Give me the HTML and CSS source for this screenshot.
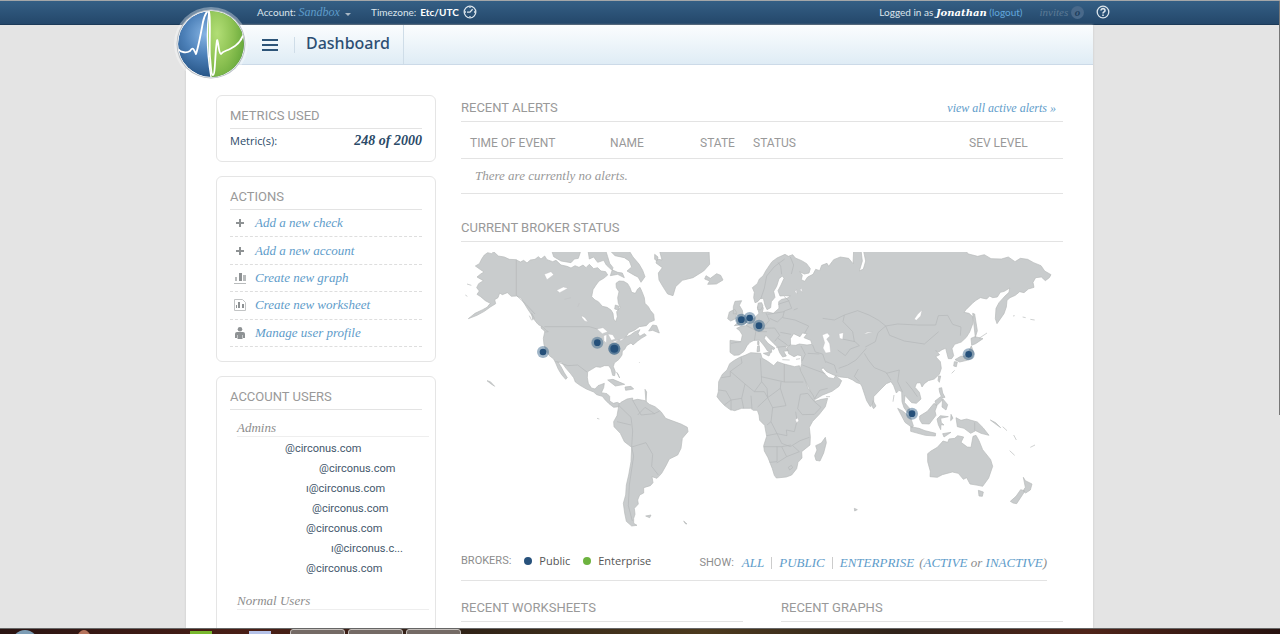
FILE: index.html
```html
<!DOCTYPE html>
<html lang="en">
<head>
<meta charset="utf-8">
<title>Dashboard</title>
<link rel="stylesheet" href="styles.css">
</head>
<body>
<div class="viewport">
  <header class="topbar">
    <div class="topbar-inner">
      <span class="account">Account: <a href="#account" class="account-name">Sandbox</a><span class="caret"></span></span>
      <span class="timezone">Timezone: <strong>Etc/UTC</strong>
        <svg class="round-icon" viewBox="0 0 14 14" aria-hidden="true"><circle cx="7" cy="7" r="5.8"/><path d="M4 7.2h3l2.6-3M7 2v1M12 7h-1M7 12v-1M2 7h1"/></svg>
      </span>
      <div class="session">
        <span>Logged in as <strong class="user">Jonathan</strong> <a href="#logout" class="logout">(logout)</a></span>
        <span class="invites">invites <span class="count">o</span></span>
        <a href="#help" class="help" aria-label="Help"><svg class="round-icon" viewBox="0 0 14 14" aria-hidden="true"><circle cx="7" cy="7" r="5.8"/><path class="thick" d="M5 5.6c0-2.7 4.2-2.5 4 0-.1 1.3-2 1.3-2 2.8M7 9.6v1.3"/></svg></a>
      </div>
    </div>
  </header>

  <div class="page">
    <div class="titlebar">
      <a href="#home" class="logo" aria-label="Circonus">
        <svg viewBox="0 0 80 80" aria-hidden="true">
          <defs>
            <radialGradient id="blue" cx=".42" cy=".35" r=".65"><stop offset="0" stop-color="#86b4e4"/><stop offset=".5" stop-color="#4c80b8"/><stop offset="1" stop-color="#275587"/></radialGradient>
            <radialGradient id="green" cx=".25" cy=".35" r=".8"><stop offset="0" stop-color="#b2de76"/><stop offset=".55" stop-color="#8cc152"/><stop offset="1" stop-color="#62a537"/></radialGradient>
            <clipPath id="disc"><circle cx="40" cy="40" r="33"/></clipPath>
          </defs>
          <circle cx="40" cy="40" r="37" fill="#fff" opacity=".35"/>
          <circle cx="40" cy="40" r="34.500" fill="#b9bfc5"/>
          <circle cx="40" cy="40" r="33.500" fill="#fff"/>
          <g clip-path="url(#disc)">
            <circle cx="40" cy="40" r="33" fill="url(#blue)"/>
            <path d="M38 5h36v70H40Q35 40 38 5Z" fill="url(#green)"/>
            <path d="M7 45c3 4 9 4 12 2 3-5 4-1 6 3 2-6 5-21 7-32 2-9 5-12 6-10 2 4 0 35 1 45s1 18 3 18 2-16 3-26 1-11 2-6 1 10 3 11c2-3 5-3 9-5 8-4 13-10 14-18" fill="none" stroke="#fff" stroke-width="1.8" stroke-linejoin="round"/>
            <path d="M38 7q-4 31 2 66" fill="none" stroke="#fff" stroke-width="1.4"/>
          </g>
        </svg>
      </a>
      <button class="menu" aria-label="Menu"><span></span><span></span><span></span></button>
      <h1>Dashboard</h1>
    </div>

    <div class="content">
      <aside class="sidebar">
        <section class="card metrics">
          <h2>METRICS USED</h2>
          <div class="metric"><span>Metric(s):</span><strong>248 of 2000</strong></div>
        </section>
        <section class="card">
          <h2>ACTIONS</h2>
          <ul class="actions">
            <li><svg viewBox="0 0 12 12" aria-hidden="true"><path d="M5 2h2v3h3v2H7v3H5V7H2V5h3z"/></svg><a href="#check">Add a new check</a></li>
            <li><svg viewBox="0 0 12 12" aria-hidden="true"><path d="M5 2h2v3h3v2H7v3H5V7H2V5h3z"/></svg><a href="#newaccount">Add a new account</a></li>
            <li><svg viewBox="0 0 12 12" aria-hidden="true"><path d="M5 1h3v8H5z"/><path class="pale" d="M1 5h2v4H1zM9 3h3v6H9zM0 11h12v1H0z"/></svg><a href="#graph">Create new graph</a></li>
            <li><svg viewBox="0 0 12 12" aria-hidden="true"><path class="outline" d="M.5.5h8l3 3v8H.5z"/><path d="M2 6h1v3H2zM4 3h2v6H4zM8 5h2v4H8z"/></svg><a href="#worksheet">Create new worksheet</a></li>
            <li><svg viewBox="0 0 12 12" aria-hidden="true"><circle cx="6" cy="2.300" r="2.300"/><path d="M3 5h6q2 0 2 2v4H9V8H8.500v4h-5V8H3v3H1V7q0-2 2-2z"/></svg><a href="#profile">Manage user profile</a></li>
          </ul>
        </section>
        <section class="card users">
          <h2>ACCOUNT USERS</h2>
          <h3>Admins</h3>
          <ul class="emails">
            <li class="in-a">@circonus.com</li>
            <li class="in-d">@circonus.com</li>
            <li class="in-b">ı@circonus.com</li>
            <li class="in-c">@circonus.com</li>
            <li class="in-b">@circonus.com</li>
            <li class="in-e">ı@circonus.c...</li>
            <li class="in-b">@circonus.com</li>
          </ul>
          <h3>Normal Users</h3>
          <ul class="emails"></ul>
        </section>
      </aside>

      <main class="main">
        <section>
          <div class="section-head"><h2>RECENT ALERTS</h2><a href="#alerts">view all active alerts »</a></div>
          <table class="alerts">
            <colgroup><col class="col-time"><col class="col-name"><col class="col-state"><col class="col-status"><col></colgroup>
            <thead><tr><th>TIME OF EVENT</th><th>NAME</th><th>STATE</th><th>STATUS</th><th>SEV LEVEL</th></tr></thead>
            <tbody><tr><td colspan="5">There are currently no alerts.</td></tr></tbody>
          </table>
        </section>

        <section class="brokers">
          <div class="section-head"><h2>CURRENT BROKER STATUS</h2></div>
          <svg class="map" viewBox="0 0 1806 834" role="img" aria-label="World map of brokers">
            <g class="land">
              <g transform="translate(0 -21)">
                <path d="M62 42L70 30 80 23 92 26 98 20 112 33 130 36 145 43 165 44 178 51 188 46 198 54 208 45 222 43 232 35 240 42 251 33 258 44 275 50 285 46 300 60 318 64 330 69 342 62 354 67 366 60 375 68 385 58 398 71 410 68 420 78 434 80 440 90 428 100 414 108 405 120 396 134 392 155 402 165 412 170 424 184 438 187 450 195 456 205 458 222 464 230 469 215 467 200 478 187 472 175 470 158 474 140 466 128 465 115 474 108 488 109 500 116 507 128 512 142 523 145 530 132 537 127 543 140 550 158 552 175 562 185 568 196 578 208 580 226 565 232 556 242 535 245 520 256 503 263 494 276 507 271 522 260 537 254 531 265 536 274 550 266 556 271 541 280 530 288 516 300 510 294 497 302 491 313 484 318 483 330 474 343 460 354 457 365 463 380 461 392 455 391 450 372 443 362 430 362 418 367 405 365 392 373 380 380 379 398 382 415 391 429 402 432 411 422 430 415 428 428 421 443 438 446 446 454 446 468 457 475 469 472 478 477 475 485 458 487 444 476 432 464 424 454 407 449 398 441 376 432 357 421 343 411 338 398 328 385 315 370 302 352 290 350 300 365 309 382 319 398 314 403 302 389 292 373 284 354 278 342 264 331 254 315 249 299 247 280 252 257 242 245 231 238 222 227 212 210 200 192 189 174 180 159 167 153 151 154 139 143 124 149 116 144 111 158 101 164 104 176 88 186 70 199 48 211 22 221 42 205 65 194 78 187 88 175 73 167 59 155 48 148 55 138 47 128 53 116 67 107 48 96 59 87 69 81 57 73 43 63 55 56Z"/>
                <path d="M270 10L278 35 300 48 330 53 340 42 352 40 358 22 370 10ZM380 10L385 42 398 36 410 52 428 46 436 60 450 73 470 82 484 84 490 98 470 88 448 92 456 68 446 55 440 35 432 10ZM440 10L462 32 490 38 505 48 512 66 498 78 522 92 531 96 540 112 552 95 545 76 534 57 516 36 500 10Z"/>
                <path d="M463 180l12 4-3 11-11-3zM575 240l12 2 8 22-20-8-12 2zM440 405l16-2 35 15-28 5zM492 426l18-2 8 8-24 4zM467 382l4 5 5 12zM552 433l5 8-2 30zM78 407l10 3 13 14-12-8zM18 117l13 4M13 150l6 4M212 205l8 15-5 4zM205 212l7 14M242 243l14 13 6 4-8 1-14-12zM535 352l1 2"/>
                <path d="M595 15L603 45 588 42 585 54 604 68 592 84 594 105 607 127 620 147 636 152 644 125 664 106 696 98 728 78 746 58 744 15Z"/>
                <path d="M474 478L480 472 498 462 515 459 515 466 530 463 552 467 565 478 582 485 600 500 614 520 630 526 660 537 679 547 681 560 664 580 660 610 650 630 625 642 616 660 602 685 588 700 573 695 576 713 568 722 548 728 548 744 536 750 530 765 532 777 520 790 522 808 518 820 518 835 528 841 512 843 496 829 491 804 487 775 494 750 496 720 503 690 510 650 512 607 490 590 478 565 459 545 458 530 468 512 472 490Z"/>
                <path d="M554 813l16-3-4 8zM668 828l10 9-5-1zM408 520l7 2"/>
              </g>
              <g transform="translate(540 -21)">
                <path d="M350 170L342 173 338 158 340 142 334 128 349 116 355 102 366 93 374 78 386 60 393 50 408 39 421 33 432 28 442 34 455 29 463 39 482 47 497 56 508 71 504 84 490 87 476 80 484 91 481 104 491 109 500 96 516 88 524 73 536 77 542 61 558 55 563 64 578 44 598 36 623 40 636 56 638 15 660 15 664 48 655 78 667 72 674 48 667 15 970 15 983 27 1010 34 1030 29 1050 41 1081 42 1102 36 1122 50 1138 40 1160 43 1178 53 1200 62 1211 78 1230 89 1225 98 1213 107 1201 96 1184 98 1176 112 1179 127 1162 132 1149 143 1136 140 1123 151 1107 158 1098 166 1096 186 1089 206 1068 236 1063 221 1065 190 1074 173 1092 153 1104 142 1106 129 1090 139 1078 142 1069 156 1055 158 1046 153 1037 162 1018 158 1005 166 996 173 975 194 969 202 984 205 996 216 995 237 986 261 976 277 961 291 941 298 933 311 938 332 932 341 922 341 918 326 914 310 903 314 893 321 884 317 896 329 884 335 898 350 901 370 895 388 880 402 862 407 850 416 843 426 838 413 827 414 822 427 835 442 840 462 826 475 812 473 800 460 792 451 790 472 804 488 809 506 799 502 789 488 783 470 782 440 774 436 766 444 758 422 750 410 736 416 720 432 698 455 698 472 688 485 677 467 663 425 658 416 647 413 635 405 620 398 598 396 578 390 557 380 546 368 541 374 552 388 563 398 578 401 584 392 602 407 594 424 573 439 545 450 523 463 513 449 503 427 487 395 476 377 482 356 481 332 470 330 459 335 443 326 438 307 448 300 464 301 475 297 498 300 513 298 509 286 489 278 498 266 484 264 477 275 458 266 448 281 449 300 433 305 441 317 428 319 436 333 425 336 416 323 410 307 399 296 387 284 374 270 370 281 381 295 402 310 397 314 391 310 392 322 380 318 370 303 356 286 339 286 327 292 318 302 309 319 294 330 279 331 267 322 267 286 300 290 304 270 296 257 287 250 300 244 314 242 329 228 341 218 354 205 349 186 360 178 367 189 364 203 380 201 397 205 414 190 413 170 422 163 438 160 448 153 431 152 417 153 411 137 420 120 429 100 424 93 414 101 407 124 398 139 402 157 391 170 389 188 378 194 372 181 367 160 358 161Z"/>
                <path d="M296 337L312 331 329 323 359 325 363 339 380 349 398 362 409 350 429 357 461 365 475 362 479 378 491 402 501 430 516 450 522 469 541 463 560 460 553 485 535 508 515 529 505 547 508 575 507 600 482 620 483 639 471 652 467 671 452 690 436 696 406 699 400 691 394 671 381 638 370 618 368 602 377 574 371 541 356 526 354 510 349 496 337 496 329 490 302 490 281 497 266 493 250 481 237 467 228 455 232 440 233 410 244 388 258 375 266 356 280 346ZM553 577L556 593 548 624 537 648 525 646 521 632 528 615 524 602 541 594Z"/>
                <path d="M277 185l5-16 20-2-7 14 9 15 3 18 12 18-14 7-25 3 10-9-4-7 6-13-7-7-8 1zM260 221l5-20 16-8 6 9-3 19-15 7zM195 92l13 8 19-14 12 5 7 14-20 12-26 1 6-10-15-6zM350 183l2-9 10-1 4 10-7 12-9-1zM367 325l22-4-5 12zM350 303l5-1 1 17-8 1zM350 289h4v10h-4zM424 344l22 1M465 343l12-2M41 28l10 8-3 12-7-5z"/>
                <path d="M995 205l6 2 8 50-6 20-4-36zM990 280l12-5 24 6-22 15-12 5zM991 303l8 22-6 15-15 6-22 5-14-7 17-10 17-2zM940 350l9 1-3 14-8-2zM1014 280l24-16M932 385l9-9M893 393h6l-4 19-4-6zM894 430l8-2 3 16 7 13-9 2-7-17zM882 468l17-13 5 10-18 18zM905 461l15 18-5 16-12-9zM696 467l9 16-7 8-5-7zM770 490l15 8 24 20 8 24-3 6-22-16zM809 545l25 5 18 7 32 8-1 8-30-2-44-12zM836 513l23-14 20-24 9 7-6 16 3 13-20 26-22-1-7-12zM888 522l10-10 24 3-23 5 2 13 8 7-9-1-1 15-7-15zM930 508l6 12-7 7zM905 566l25-4-21 14zM945 518l15 8 17-4 32 9 17 17 18 23-24-6-16-8-15 8-20-15-20-5z"/>
                <path d="M860 626L870 618 889 607 906 588 920 592 924 582 941 580 950 572 968 576 960 592 979 606 990 607 996 574 1005 571 1014 587 1025 614 1049 644 1055 664 1043 699 1025 724 1011 721 987 717 977 698 967 703 952 685 934 681 904 689 889 697 867 695 868 679 860 650ZM1012 736l15 5-3 13-10-1zM1147 697l6 10 20 10-5 18-14 9-8-6 7-11zM1139 734l13 4-8 12-17 26-11-2-8-5 17-15zM1048 525l16 8 15 15-14-10zM1085 545l13 12M1118 570l8 15M1106 617l15 14M1168 607l14-7M640 790l9 4-8 4zM1116 213l5-1M1145 216l9 2M1168 223l13 2M759 450l-3 20M555 455h12"/>
              </g>
            </g>
            <g class="borders">
              <g transform="translate(0 -21)"><path d="M166 44V151L197 180 222 207M250 245H385L418 255M283 349L320 362 350 360 378 381M475 483L510 517 515 558 512 606M515 466L540 510 580 506 596 498M512 606L555 593 575 628 572 664 592 690M512 606L518 633 505 720 502 782 514 828M468 530L510 540M530 510L552 487 582 507"/></g>
              <g transform="translate(540 -21)"><path d="M359 162L370 130 377 93 400 65 431 42M422 88L419 63 411 52M451 87L458 60 448 36M429 154L443 167 452 190 430 198 425 218 462 225 503 243 491 265M375 204L385 226 365 250 401 249 416 271 401 289M425 216L409 231 386 220M445 167L411 178M430 200L380 208M315 241L345 257 340 287M270 295L300 290M378 260L350 260M418 262L450 268M411 280L439 300M405 307L434 304M480 303L493 328 483 348M515 300L523 321 545 327 554 353M500 325L535 327M484 360L510 370 553 386M520 462L536 436 560 430M590 315L613 332 628 312 655 302 642 290 604 282M593 370L620 360 645 345 660 328 676 310M670 325L682 345 700 368 735 382 750 405M655 410L640 394 652 372M736 385L775 375 770 410 785 442M795 410L815 435 829 455M640 290L635 260 606 230 610 210 650 197 684 210 713 226 734 243 770 237 830 240 884 240 892 212 920 211 935 238 960 246 958 272M734 243L746 271 790 288 850 297 893 260M673 306L703 290 711 263 734 243M555 350L580 360 588 384M545 220L580 225 610 210M470 190L458 195"/>
                <path d="M300 337L303 354 268 379V394L241 398M268 379L312 417 340 440 362 410 358 340M430 357V411H487M430 411L360 395M362 410L378 430 380 458 418 430 420 411M233 435L255 438 270 465 302 460 312 417M250 480L270 465 270 497M302 460L308 490M330 452L333 491M340 440L370 440 380 458 350 486M380 458L395 488 435 482 418 430M478 448L500 445 520 470 540 487 520 508 484 509 470 491 478 448M395 488L390 530 378 540M390 530L408 566 438 572 436 555 460 560 468 528 464 500M377 572L408 566 422 595 448 605 477 587 505 577M368 605L422 605 450 600M408 605V650L386 652M422 605L437 635 407 654M437 635L475 620 455 602M442 667l9-6 4 7-9 7zM1001 532V556"/></g>
            </g>
            <g class="water" transform="translate(0 -21)">
              <path d="M250 88l20-8 8 9-20 15zM287 136l20-10 14 4-25 13zM310 163l20-5M350 186l5-12M362 212l10 6 9 13-10-3-8-10zM408 252l18-4 14 12-16 6zM428 272l9-3-1 25-7-7zM441 267l14 2 8 13-12 4zM455 290l18-6-12 9zM477 283l14-3-13 8z"/>
              <path d="M1084 270l15-6 8 9-10 9 9 14 3 26-15 2-8-15 5-16zM1134 266l13-3-2 20-9-3zM1360 222l10-14 13-13-4 18-13 13zM1002 140l4-6 2 12zM1017 135l4-5 4 11zM1209 267l9-5 17-1M1003 524l7-5 3 8-6 7zM921 454l3-1"/>
            </g>
            <g class="pin">
              <circle cx="246" cy="300" r="18"/><circle cx="409" cy="272" r="18"/><circle cx="460" cy="290" r="18"/><circle cx="460" cy="290" r="18"/><circle cx="841" cy="203" r="18"/><circle cx="866" cy="198" r="18"/><circle cx="894" cy="221" r="18"/><circle cx="1523" cy="307" r="18"/><circle cx="1353" cy="485" r="18"/>
            </g>
            <g class="pin-core">
              <circle cx="246" cy="300" r="10"/><circle cx="409" cy="272" r="10"/><circle cx="460" cy="290" r="12"/><circle cx="841" cy="203" r="10"/><circle cx="866" cy="198" r="10"/><circle cx="894" cy="221" r="10"/><circle cx="1523" cy="307" r="10"/><circle cx="1353" cy="485" r="10"/>
            </g>
          </svg>
          <div class="map-footer">
            <div class="legend"><span>BROKERS:</span><span class="key public">Public</span><span class="key enterprise">Enterprise</span></div>
            <div class="filter"><span class="label">SHOW:</span><a href="#all">ALL</a><i class="bar"></i><a href="#public">PUBLIC</a><i class="bar"></i><a href="#enterprise">ENTERPRISE</a><span class="group">(<a href="#active">ACTIVE</a> or <a href="#inactive">INACTIVE</a>)</span></div>
          </div>
        </section>

        <div class="recent">
          <section class="section-head"><h2>RECENT WORKSHEETS</h2></section>
          <section class="section-head"><h2>RECENT GRAPHS</h2></section>
        </div>
      </main>
    </div>
  </div>
  <div class="scrollbar"></div>
</div>
<footer class="taskbar"><span class="orb"></span><span class="orb red"></span><span class="tile green"></span><span class="tile blue"></span><span class="task"></span><span class="task"></span><span class="task"></span></footer>
</body>
</html>
```

FILE: styles.css
```css
* { box-sizing: border-box; }
body {
  margin: 0;
  height: 100vh;
  display: flex;
  flex-direction: column;
  overflow: hidden;
  background: #e4e4e4;
  color: #2b4a68;
  font: 12px/20px "Open Sans", "Noto Sans", sans-serif;
}
h1, h2, h3, ul { margin: 0; padding: 0; font-weight: 400; list-style: none; }
a { color: #5e9cca; text-decoration: none; }

.viewport {
  flex: 1;
  min-height: 0;
  position: relative;
  display: flex;
  flex-direction: column;
  padding-right: 1px;
  border-top: 1px solid #a3a6a8;
}
.scrollbar {
  position: absolute;
  top: 0;
  right: 0;
  width: 1px;
  height: 66%;
  background: #777;
}

.topbar {
  flex: none;
  height: 24px;
  background: linear-gradient(#345f85, #24476a);
  border-bottom: 1px solid #1c3a58;
  color: #dce5ec;
  font-family: Lato, sans-serif;
  font-size: 10px;
}
.topbar-inner {
  max-width: 907px;
  height: 22px;
  margin: 0 auto;
  padding-left: 71px;
  display: flex;
  align-items: center;
}
.account { width: 114px; }
.account-name { font: italic 12px "Liberation Serif", serif; }
.caret {
  display: inline-block;
  margin-left: 5px;
  border: 3px solid transparent;
  border-top-color: #a9b8c5;
  border-bottom: 0;
}
.timezone { display: flex; align-items: center; gap: 4px; }
.timezone strong, .user { color: #fff; }
.round-icon {
  display: block;
  width: 14px;
  height: 14px;
  fill: none;
  stroke: #dce5ec;
  stroke-width: 1.3;
}
.round-icon .thick { stroke-width: 1.6; }
.session { display: flex; align-items: center; margin: 0 -17px 0 auto; }
.user { font: italic bold 10px "DejaVu Serif", serif; }
.logout { color: #62a8dd; }
.invites { margin: 0 12px 0 17px; color: #5c7b96; font: italic 11px "Liberation Serif", serif; }
.count {
  display: inline-block;
  width: 13px;
  height: 13px;
  border-radius: 50%;
  background: #49698a;
  color: #203f5e;
  font-weight: bold;
  line-height: 12px;
  text-align: center;
}

.page {
  flex: 1;
  min-height: 0;
  width: 100%;
  max-width: 907px;
  margin: 0 auto;
  background: #fff;
  box-shadow: 0 0 2px #c8c8c8;
}
.titlebar {
  position: relative;
  height: 40px;
  display: flex;
  align-items: center;
  padding-left: 76px;
  background: linear-gradient(#fbfdfe, #dfecf5);
  border-bottom: 1px solid #ccdae8;
}
.logo { position: absolute; left: -15px; top: -21px; width: 80px; height: 80px; }
.logo svg { display: block; }
.menu {
  width: 33px;
  height: 16px;
  display: flex;
  flex-direction: column;
  justify-content: center;
  gap: 3px;
  padding: 0 16px 0 0;
  border: 0;
  border-right: 1px solid #cfdde8;
  background: none;
}
.menu span { height: 2px; background: #2d5478; }
h1 {
  align-self: stretch;
  padding: 0 13px 0 11px;
  border-right: 1px solid #cfdde8;
  color: #2d4f73;
  font: 500 16px/37px "Noto Sans", sans-serif;
}

.content {
  display: grid;
  grid-template-columns: 220px minmax(0, 1fr);
  gap: 25px;
  padding: 30px 30px 0;
}
.sidebar { display: flex; flex-direction: column; gap: 14px; }
.card {
  padding: 8px 13px 14px;
  border: 1px solid #e5e5e5;
  border-radius: 6px;
}
.metrics { padding-bottom: 8px; }
h2 { color: #999; font: 13px/24px Roboto, sans-serif; }
.card h2 { border-bottom: 1px solid #e3e3e3; }
.metric { display: flex; justify-content: space-between; line-height: 24px; font-size: 11px; }
.metric strong { font: italic bold 14px/24px "Liberation Serif", serif; }
.actions { display: grid; grid-auto-rows: 1fr; min-height: 137px; }
.actions li {
  display: flex;
  align-items: center;
  gap: 9px;
  padding-left: 4px;
  border-bottom: 1px dashed #dedede;
}
.actions svg { width: 12px; height: 12px; fill: #8e9294; }
.actions .pale { fill: #b8bbbc; }
.actions .outline { fill: none; stroke: #c2c4c5; }
.actions a { font: italic 13px/20px "Liberation Serif", serif; }
h3 {
  margin: 9px -7px 0 7px;
  border-bottom: 1px solid #eee;
  color: #8d8d8d;
  font: italic 13px/17px "Liberation Serif", serif;
}
.emails { min-height: 40px; padding: 2px 0 4px; font: 11px/20px Roboto, sans-serif; color: #44586c; }
.in-a { padding-left: 55px; }
.in-b { padding-left: 76px; }
.in-c { padding-left: 82px; }
.in-d { padding-left: 89px; }
.in-e { padding-left: 101px; }

.section-head {
  display: flex;
  justify-content: space-between;
  border-bottom: 1px solid #e3e3e3;
}
.section-head h2 { line-height: 26px; }
.section-head a { padding-right: 7px; font: italic 12px/26px "Liberation Serif", serif; }
.alerts { width: 100%; table-layout: fixed; border-collapse: collapse; }
.col-time { width: 140px; }
.col-name { width: 90px; }
.col-state { width: 53px; }
.col-status { width: 216px; }
.alerts th, .alerts td {
  padding: 11px 0 5px 9px;
  border-bottom: 1px solid #e3e3e3;
  text-align: left;
  color: #999;
  font: 12px/20px Roboto, sans-serif;
}
.alerts td { padding: 7px 14px; font: italic 13px/20px "Liberation Serif", serif; }
.brokers { margin-top: 21px; }
.map { display: block; width: 100%; margin-top: 10px; }
.land { fill: #c9cccd; stroke: #b6b9ba; stroke-width: 2; stroke-linejoin: round; }
.borders { fill: none; stroke: #b4b6b8; stroke-width: 2; stroke-linejoin: round; }
.water { fill: #fff; stroke: #b8babc; stroke-width: 1; }
.pin { fill: #2f5d85; fill-opacity: .45; }
.pin-core { fill: #25507a; }
.map-footer {
  display: flex;
  justify-content: space-between;
  margin: 20px 16px 0 0;
  padding-bottom: 6px;
  border-bottom: 1px solid #e3e3e3;
  color: #8d8d8d;
}
.legend { display: flex; align-items: flex-start; font: 11px/22px Roboto, sans-serif; }
.key { display: flex; align-items: center; color: #555; font: 11px/22px "Open Sans", sans-serif; }
.key::before { content: ""; width: 8px; height: 8px; margin: 0 7px 0 13px; border-radius: 50%; background: #28527c; }
.enterprise::before { background: #6db33f; }
.filter { display: flex; align-items: center; padding-top: 2px; font: italic 13px/22px "Liberation Serif", serif; }
.label { margin-right: 8px; font: 11px/22px Roboto, sans-serif; }
.bar { width: 1px; height: 12px; margin: 0 7px; background: #ccc; }
.group { margin-left: 5px; }
.recent {
  display: grid;
  grid-template-columns: 1fr 1fr;
  gap: 38px;
  margin-top: 14px;
}

.taskbar {
  flex: none;
  position: relative;
  height: 6px;
  display: flex;
  gap: 3px;
  padding-left: 12px;
  overflow: hidden;
  border-top: 1px solid #666;
  background: linear-gradient(90deg, #2a1412, #4a1f16 20%, #2e2117 35%, #4c3a1e 55%, #30231a 70%, #4f2419 85%, #27120f);
}
.orb { width: 26px; height: 26px; margin: 1px 35px 0 0; border-radius: 50%; background: #7c9cb4; }
.orb.red { width: 16px; margin-right: 95px; background: #b5735c; }
.tile { width: 22px; height: 5px; margin: 2px 34px 0 0; background: #78b82e; }
.tile.blue { margin-right: 16px; background: #b5c2e8; }
.task { width: 55px; height: 12px; border: 1px solid #c4bfbb; border-radius: 3px; background: #746a65; }
```
